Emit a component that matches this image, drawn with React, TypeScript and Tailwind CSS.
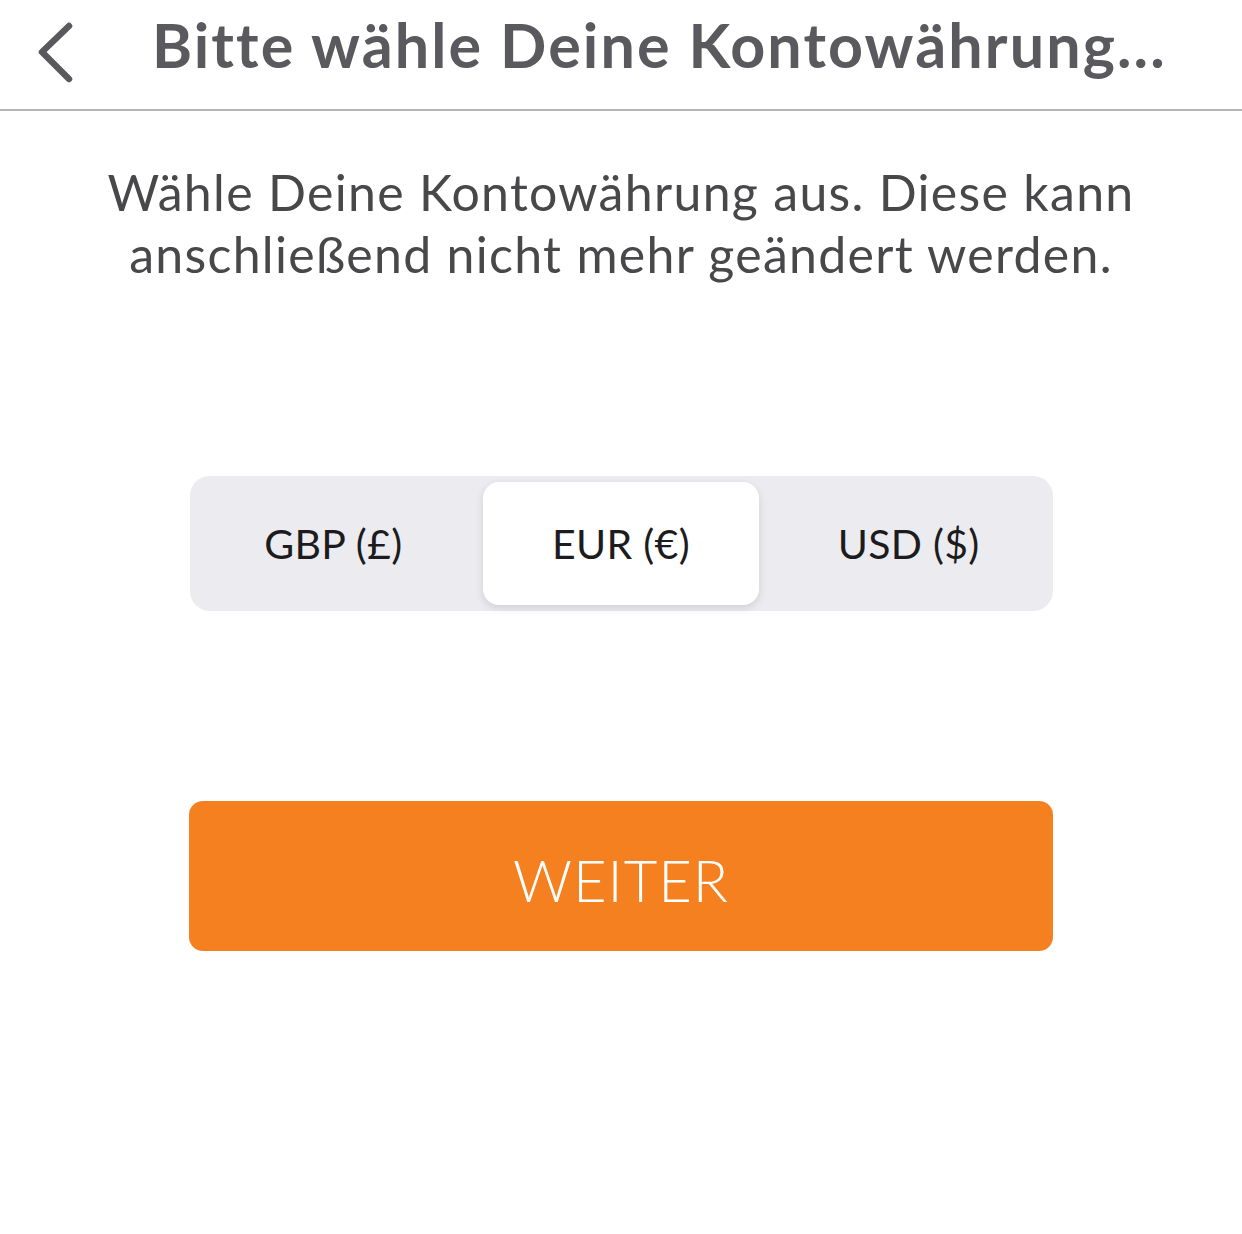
import { useState } from "react";

const currencies = ["GBP (£)", "EUR (€)", "USD ($)"];

export default function App() {
  const [selected, setSelected] = useState(1);

  return (
    <div className="min-h-[1234px] w-[1242px] bg-white font-['Lato',sans-serif]">
      {/* Header */}
      <div className="flex h-[111px] items-center border-b-[2px] border-[#b4b4b6]">
        <button className="flex w-[152px] shrink-0 items-center pl-[36px] pb-[4px]">
          <svg width="44" height="64" viewBox="0 0 44 64" fill="none">
            <path
              d="M33 5 L6 31 L33 58"
              stroke="#59595d"
              strokeWidth="6.5"
              strokeLinecap="round"
              strokeLinejoin="round"
            />
          </svg>
        </button>
        <h1 className="whitespace-nowrap pb-[20px] text-[61px] font-bold tracking-[2.1px] text-[#5a5a5e]">
          Bitte wähle Deine Kontowährung...
        </h1>
      </div>

      {/* Intro text */}
      <p className="mx-auto mt-[50px] w-[1100px] text-center text-[50px] leading-[62px] tracking-[1.3px] text-[#48484a]">
        Wähle Deine Kontowährung aus. Diese kann anschließend nicht mehr geändert werden.
      </p>

      {/* Currency segmented control */}
      <div className="mx-auto mt-[191px] grid h-[135px] w-[863px] grid-cols-3 gap-[12px] rounded-[20px] bg-[#ececf0] p-[6px]">
        {currencies.map((c, i) => (
          <button
            key={c}
            onClick={() => setSelected(i)}
            className={`flex items-center justify-center rounded-[16px] text-[41px] tracking-[0.3px] text-[#1c1c1e] ${
              i === selected ? "bg-white shadow-[0_3px_8px_rgba(0,0,0,0.12)]" : ""
            }`}
          >
            {c}
          </button>
        ))}
      </div>

      {/* Continue */}
      <button className="mx-auto mt-[190px] flex h-[150px] w-[864px] items-center justify-center rounded-[14px] bg-[#f58020] pt-[6px] text-[58px] font-light tracking-[1px] text-white">
        WEITER
      </button>
    </div>
  );
}
